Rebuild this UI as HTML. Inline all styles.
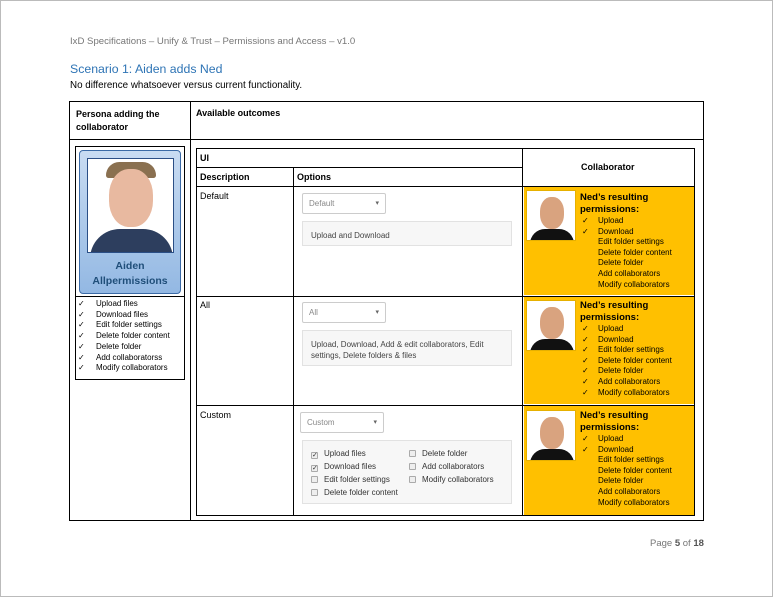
<!DOCTYPE html>
<html><head><meta charset="utf-8"><style>
*{margin:0;padding:0;box-sizing:border-box}
body{width:773px;height:597px;background:#fff;position:relative;font-family:"Liberation Sans",sans-serif;color:#000;overflow:hidden}
.a{position:absolute}
.pg{left:0;top:0;width:773px;height:597px;border:1px solid #bbb}
.t{font-size:9px}
.hl{background:#000}
.sel{border:1px solid #ccc;border-radius:2px;background:#fff;font-size:8px;color:#888;padding:5px 6px;height:21px}
.sel:after{content:"▾";position:absolute;right:6px;top:5px;font-size:7px;color:#666}
.box{background:#f7f7f7;border:1px solid #e2e2e2;font-size:8px;color:#444;padding:8px 8px;line-height:11px}
.y{background:#ffc000}
.ned{border:1px solid #e6b000;background:#fff;overflow:hidden}
.perm{font-size:8px;line-height:10.6px}
.perm b{font-size:9.5px;display:block;line-height:12px}
.cb{display:inline-block;width:7px;height:7px;border:1px solid #aaa;border-radius:1px;background:#eee;margin-right:6px;vertical-align:-1px;font-size:7px;line-height:5px;text-align:center}
</style></head><body>
<div class="a pg"></div>
<div class="a" style="left:70px;top:36px;font-size:9.6px;color:#777">IxD Specifications – Unify &amp; Trust – Permissions and Access – v1.0</div>
<div class="a" style="left:70px;top:62px;font-size:12.3px;color:#2e74b5">Scenario 1: Aiden adds Ned</div>
<div class="a" style="left:70px;top:80px;font-size:9.8px">No difference whatsoever versus current functionality.</div>

<div class="a" style="left:69px;top:101px;width:635px;height:420px;border:1px solid #000"></div>
<div class="a hl" style="left:69px;top:139px;width:635px;height:1px"></div>
<div class="a hl" style="left:190px;top:101px;width:1px;height:420px"></div>
<div class="a t" style="left:76px;top:108px;font-weight:bold;line-height:13px">Persona adding the<br>collaborator</div>
<div class="a t" style="left:196px;top:108px;font-weight:bold">Available outcomes</div>

<div class="a" style="left:75px;top:146px;width:110px;height:234px;border:1px solid #000"></div>
<div class="a" style="left:79px;top:150px;width:102px;height:144px;background:linear-gradient(#c9dcf2,#93b8e3);border:1px solid #3b6aa6;border-radius:4px"></div>
<div class="a" style="left:87px;top:158px;width:87px;height:95px;border:1px solid #2b4f86;background:#fff;overflow:hidden">
<div class="a" style="left:18px;top:3px;width:50px;height:16px;background:#8a7050;border-radius:25px 25px 5px 5px"></div>
<div class="a" style="left:21px;top:10px;width:44px;height:58px;background:#e8b9a0;border-radius:45%"></div>
<div class="a" style="left:2px;top:70px;width:83px;height:30px;background:#2d3e5e;border-radius:30px 30px 0 0"></div>
</div>
<div class="a" style="left:79px;top:259px;width:102px;text-align:center;font-size:10.5px;font-weight:bold;color:#1f4e79;line-height:15px">Aiden<br>Allpermissions</div>
<div class="a hl" style="left:75px;top:296px;width:110px;height:1px"></div>
<div class="a" style="left:78px;top:299px;font-size:8px;line-height:10.7px">✓<br>✓<br>✓<br>✓<br>✓<br>✓<br>✓</div>
<div class="a" style="left:96px;top:299px;font-size:8px;line-height:10.7px">Upload files<br>Download files<br>Edit folder settings<br>Delete folder content<br>Delete folder<br>Add collaboratorss<br>Modify collaborators</div>

<div class="a" style="left:196px;top:148px;width:499px;height:368px;border:1px solid #000"></div>
<div class="a hl" style="left:196px;top:167px;width:327px;height:1px"></div>
<div class="a hl" style="left:196px;top:186px;width:499px;height:1px"></div>
<div class="a hl" style="left:196px;top:296px;width:499px;height:1px"></div>
<div class="a hl" style="left:196px;top:405px;width:499px;height:1px"></div>
<div class="a hl" style="left:293px;top:167px;width:1px;height:349px"></div>
<div class="a hl" style="left:522px;top:148px;width:1px;height:368px"></div>
<div class="a t" style="left:200px;top:153px;font-weight:bold">UI</div>
<div class="a t" style="left:200px;top:172px;font-weight:bold">Description</div>
<div class="a t" style="left:297px;top:172px;font-weight:bold">Options</div>
<div class="a t" style="left:581px;top:162px;font-weight:bold">Collaborator</div>
<div class="a t" style="left:200px;top:191px">Default</div>
<div class="a t" style="left:200px;top:300px">All</div>
<div class="a t" style="left:200px;top:410px">Custom</div>

<div class="a sel" style="left:302px;top:193px;width:84px">Default</div>
<div class="a box" style="left:302px;top:221px;width:210px;height:25px">Upload and Download</div>
<div class="a sel" style="left:302px;top:302px;width:84px">All</div>
<div class="a box" style="left:302px;top:330px;width:210px;height:36px">Upload, Download, Add &amp; edit collaborators, Edit settings, Delete folders &amp; files</div>
<div class="a sel" style="left:300px;top:412px;width:84px">Custom</div>
<div class="a box" style="left:302px;top:440px;width:210px;height:64px;color:#333;line-height:13px;padding:7px 8px">
<div class="a" style="left:8px;top:6px"><span class="cb">✓</span>Upload files<br><span class="cb">✓</span>Download files<br><span class="cb"></span>Edit folder settings<br><span class="cb"></span>Delete folder content</div>
<div class="a" style="left:106px;top:6px"><span class="cb"></span>Delete folder<br><span class="cb"></span>Add collaborators<br><span class="cb"></span>Modify collaborators</div>
</div>

<div class="a y" style="left:524px;top:187px;width:170px;height:108px"></div>
<div class="a y" style="left:524px;top:297px;width:170px;height:107px"></div>
<div class="a y" style="left:524px;top:406px;width:170px;height:109px"></div>

<div class="a ned" style="left:526px;top:190px;width:50px;height:51px"><div class="a" style="left:13px;top:6px;width:24px;height:32px;background:#d9a37f;border-radius:45%"></div><div class="a" style="left:3px;top:38px;width:44px;height:15px;background:#111;border-radius:15px 15px 0 0"></div></div>
<div class="a ned" style="left:526px;top:300px;width:50px;height:51px"><div class="a" style="left:13px;top:6px;width:24px;height:32px;background:#d9a37f;border-radius:45%"></div><div class="a" style="left:3px;top:38px;width:44px;height:15px;background:#111;border-radius:15px 15px 0 0"></div></div>
<div class="a ned" style="left:526px;top:410px;width:50px;height:51px"><div class="a" style="left:13px;top:6px;width:24px;height:32px;background:#d9a37f;border-radius:45%"></div><div class="a" style="left:3px;top:38px;width:44px;height:15px;background:#111;border-radius:15px 15px 0 0"></div></div>

<div class="a perm" style="left:580px;top:192px"><b>Ned’s resulting<br>permissions:</b></div>
<div class="a perm" style="left:582px;top:216px">✓<br>✓</div>
<div class="a perm" style="left:598px;top:216px">Upload<br>Download<br>Edit folder settings<br>Delete folder content<br>Delete folder<br>Add collaborators<br>Modify collaborators</div>

<div class="a perm" style="left:580px;top:300px"><b>Ned’s resulting<br>permissions:</b></div>
<div class="a perm" style="left:582px;top:324px">✓<br>✓<br>✓<br>✓<br>✓<br>✓<br>✓</div>
<div class="a perm" style="left:598px;top:324px">Upload<br>Download<br>Edit folder settings<br>Delete folder content<br>Delete folder<br>Add collaborators<br>Modify collaborators</div>

<div class="a perm" style="left:580px;top:410px"><b>Ned’s resulting<br>permissions:</b></div>
<div class="a perm" style="left:582px;top:434px">✓<br>✓</div>
<div class="a perm" style="left:598px;top:434px">Upload<br>Download<br>Edit folder settings<br>Delete folder content<br>Delete folder<br>Add collaborators<br>Modify collaborators</div>

<div class="a" style="left:650px;top:538px;font-size:9.5px;color:#777">Page <b style="color:#555">5</b> of <b style="color:#555">18</b></div>
</body></html>
